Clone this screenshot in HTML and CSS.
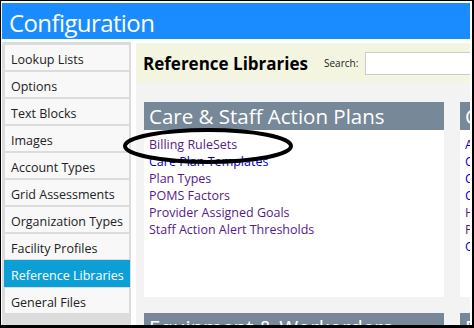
FILE: index.html
```html
<!DOCTYPE html>
<html lang="en">
<head>
    <meta charset="UTF-8">
    <title>Configuration - Reference Libraries</title>
    <link rel="stylesheet" href="styles.css">
</head>
<body>

<div class="frame">
    <header class="topbar">Configuration</header>

    <div class="main">
        <nav class="sidebar">
            <a href="#" class="side-item">Lookup Lists</a>
            <a href="#" class="side-item">Options</a>
            <a href="#" class="side-item">Text Blocks</a>
            <a href="#" class="side-item">Images</a>
            <a href="#" class="side-item">Account Types</a>
            <a href="#" class="side-item">Grid Assessments</a>
            <a href="#" class="side-item">Organization Types</a>
            <a href="#" class="side-item">Facility Profiles</a>
            <a href="#" class="side-item active">Reference Libraries</a>
            <a href="#" class="side-item">General Files</a>
        </nav>

        <section class="content">
            <div class="content-head">
                <h1>Reference Libraries</h1>
                <label for="search">Search:</label>
                <input type="text" id="search">
            </div>

            <div class="libraries">
                <div class="panel">
                    <div class="panel-title">Care &amp; Staff Action Plans</div>
                    <div class="panel-body">
                        <a href="#" class="visited">Billing RuleSets</a>
                        <a href="#">Care Plan Templates</a>
                        <a href="#" class="visited">Plan Types</a>
                        <a href="#" class="visited">POMS Factors</a>
                        <a href="#" class="visited">Provider Assigned Goals</a>
                        <a href="#" class="visited">Staff Action Alert Thresholds</a>
                    </div>
                </div>

                <div class="panel">
                    <div class="panel-title">Clinical</div>
                    <div class="panel-body">
                        <a href="#">Allergies</a>
                        <a href="#">Conditions</a>
                        <a href="#">Contacts</a>
                        <a href="#">Contact Types</a>
                        <a href="#" class="visited">Health Indicators</a>
                        <a href="#" class="visited">Problems</a>
                        <a href="#">Outcomes</a>
                    </div>
                </div>

                <div class="panel">
                    <div class="panel-title">Equipment &amp; Workorders</div>
                    <div class="panel-body"></div>
                </div>

                <div class="panel">
                    <div class="panel-title">Forms</div>
                    <div class="panel-body"></div>
                </div>
            </div>
        </section>
    </div>
</div>

<!-- hand drawn mark on the screenshot -->
<svg class="annotation" width="474" height="328" viewBox="0 0 474 328">
    <ellipse cx="208" cy="146" rx="83" ry="16" fill="none" stroke="#000" stroke-width="4"/>
</svg>

</body>
</html>
```

FILE: styles.css
```css
body {
    margin: 0;
    background-color: #000;
    font-family: 'Open Sans', 'Noto Sans', sans-serif;
    position: relative;
}

.frame {
    margin: 1px 2px 3px 1px;
    height: 324px;
    padding: 2px 2px 0 1px;
    box-sizing: border-box;
    background-color: #fff;
    overflow: hidden;
    display: flex;
    flex-direction: column;
}

.topbar {
    height: 36px;
    flex-shrink: 0;
    background-color: #1a8cff;
    color: #fff;
    font-size: 24px;
    letter-spacing: -0.6px;
    line-height: 39px;
    padding-left: 7px;
    margin-bottom: 3px;
    overflow: hidden;
}

.main {
    flex: 1;
    display: flex;
    min-height: 0;
}

.sidebar {
    width: 129px;
    flex-shrink: 0;
    box-sizing: border-box;
    background-color: #dcdcdc;
    padding: 2px 1px 0 2px;
    display: flex;
    flex-direction: column;
}

.side-item {
    display: block;
    height: 23px;
    line-height: 25px;
    padding: 2px 0 0 6px;
    border: 1px solid #dcdcdc;
    background-color: #f8f8f8;
    color: #222;
    font-size: 12.5px;
    text-decoration: none;
    white-space: nowrap;
}

.side-item.active {
    background-color: #0c9fd6;
    border-color: #0c9fd6;
    color: #fff;
}

.content {
    flex: 1;
    margin-left: 5px;
    margin-top: 1px;
    background-color: #f3f3f3;
    overflow: hidden;
}

.content-head {
    height: 40px;
    background-color: #f3f5e0;
    display: flex;
    align-items: center;
    padding-left: 7px;
    white-space: nowrap;
}

.content-head h1 {
    margin: 0;
    font-size: 17px;
    font-weight: bold;
    color: #000;
}

.content-head label {
    font-size: 10px;
    color: #222;
    margin-left: 16px;
    margin-right: 7px;
}

.content-head input {
    width: 200px;
    height: 23px;
    box-sizing: border-box;
    border: 1px solid #ccc;
    flex-shrink: 0;
}

.libraries {
    display: grid;
    grid-template-columns: 300px 300px;
    gap: 16px;
    padding: 19px 0 0 8px;
}

.panel {
    background-color: #fff;
}

.panel-title {
    height: 28px;
    line-height: 28px;
    background-color: #778899;
    color: #fff;
    font-size: 20.5px;
    padding-left: 5px;
    white-space: nowrap;
    overflow: hidden;
}

.panel-body {
    height: 161px;
    padding: 6px 5px 0;
}

.panel-body a {
    display: block;
    font-size: 12.5px;
    line-height: 17px;
    color: #0000cc;
    text-decoration: none;
    white-space: nowrap;
}

.panel-body a.visited {
    color: #551a8b;
}

.annotation {
    position: absolute;
    left: 0;
    top: 0;
    pointer-events: none;
}
```
